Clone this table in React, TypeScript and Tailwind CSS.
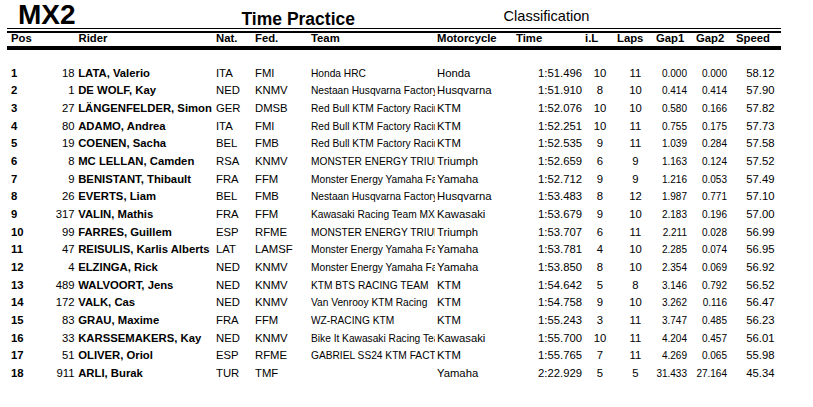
type Row = {
  pos: number;
  num: number;
  rider: string;
  nat: string;
  fed: string;
  team: string;
  moto: string;
  time: string;
  il: number;
  laps: number;
  gap1: string;
  gap2: string;
  speed: string;
};

const rows: Row[] = [
  { pos: 1, num: 18, rider: "LATA, Valerio", nat: "ITA", fed: "FMI", team: "Honda HRC", moto: "Honda", time: "1:51.496", il: 10, laps: 11, gap1: "0.000", gap2: "0.000", speed: "58.12" },
  { pos: 2, num: 1, rider: "DE WOLF, Kay", nat: "NED", fed: "KNMV", team: "Nestaan Husqvarna Factory Racing", moto: "Husqvarna", time: "1:51.910", il: 8, laps: 10, gap1: "0.414", gap2: "0.414", speed: "57.90" },
  { pos: 3, num: 27, rider: "LÄNGENFELDER, Simon", nat: "GER", fed: "DMSB", team: "Red Bull KTM Factory Racing", moto: "KTM", time: "1:52.076", il: 10, laps: 10, gap1: "0.580", gap2: "0.166", speed: "57.82" },
  { pos: 4, num: 80, rider: "ADAMO, Andrea", nat: "ITA", fed: "FMI", team: "Red Bull KTM Factory Racing", moto: "KTM", time: "1:52.251", il: 10, laps: 11, gap1: "0.755", gap2: "0.175", speed: "57.73" },
  { pos: 5, num: 19, rider: "COENEN, Sacha", nat: "BEL", fed: "FMB", team: "Red Bull KTM Factory Racing", moto: "KTM", time: "1:52.535", il: 9, laps: 11, gap1: "1.039", gap2: "0.284", speed: "57.58" },
  { pos: 6, num: 8, rider: "MC LELLAN, Camden", nat: "RSA", fed: "KNMV", team: "MONSTER ENERGY TRIUMPH RACING", moto: "Triumph", time: "1:52.659", il: 6, laps: 9, gap1: "1.163", gap2: "0.124", speed: "57.52" },
  { pos: 7, num: 9, rider: "BENISTANT, Thibault", nat: "FRA", fed: "FFM", team: "Monster Energy Yamaha Factory MX2", moto: "Yamaha", time: "1:52.712", il: 9, laps: 9, gap1: "1.216", gap2: "0.053", speed: "57.49" },
  { pos: 8, num: 26, rider: "EVERTS, Liam", nat: "BEL", fed: "FMB", team: "Nestaan Husqvarna Factory Racing", moto: "Husqvarna", time: "1:53.483", il: 8, laps: 12, gap1: "1.987", gap2: "0.771", speed: "57.10" },
  { pos: 9, num: 317, rider: "VALIN, Mathis", nat: "FRA", fed: "FFM", team: "Kawasaki Racing Team MXGP", moto: "Kawasaki", time: "1:53.679", il: 9, laps: 10, gap1: "2.183", gap2: "0.196", speed: "57.00" },
  { pos: 10, num: 99, rider: "FARRES, Guillem", nat: "ESP", fed: "RFME", team: "MONSTER ENERGY TRIUMPH RACING", moto: "Triumph", time: "1:53.707", il: 6, laps: 11, gap1: "2.211", gap2: "0.028", speed: "56.99" },
  { pos: 11, num: 47, rider: "REISULIS, Karlis Alberts", nat: "LAT", fed: "LAMSF", team: "Monster Energy Yamaha Factory MX2", moto: "Yamaha", time: "1:53.781", il: 4, laps: 10, gap1: "2.285", gap2: "0.074", speed: "56.95" },
  { pos: 12, num: 4, rider: "ELZINGA, Rick", nat: "NED", fed: "KNMV", team: "Monster Energy Yamaha Factory MX2", moto: "Yamaha", time: "1:53.850", il: 8, laps: 10, gap1: "2.354", gap2: "0.069", speed: "56.92" },
  { pos: 13, num: 489, rider: "WALVOORT, Jens", nat: "NED", fed: "KNMV", team: "KTM BTS RACING TEAM", moto: "KTM", time: "1:54.642", il: 5, laps: 8, gap1: "3.146", gap2: "0.792", speed: "56.52" },
  { pos: 14, num: 172, rider: "VALK, Cas", nat: "NED", fed: "KNMV", team: "Van Venrooy KTM Racing", moto: "KTM", time: "1:54.758", il: 9, laps: 10, gap1: "3.262", gap2: "0.116", speed: "56.47" },
  { pos: 15, num: 83, rider: "GRAU, Maxime", nat: "FRA", fed: "FFM", team: "WZ-RACING KTM", moto: "KTM", time: "1:55.243", il: 3, laps: 11, gap1: "3.747", gap2: "0.485", speed: "56.23" },
  { pos: 16, num: 33, rider: "KARSSEMAKERS, Kay", nat: "NED", fed: "KNMV", team: "Bike It Kawasaki Racing Team", moto: "Kawasaki", time: "1:55.700", il: 10, laps: 11, gap1: "4.204", gap2: "0.457", speed: "56.01" },
  { pos: 17, num: 51, rider: "OLIVER, Oriol", nat: "ESP", fed: "RFME", team: "GABRIEL SS24 KTM FACTORY", moto: "KTM", time: "1:55.765", il: 7, laps: 11, gap1: "4.269", gap2: "0.065", speed: "55.98" },
  { pos: 18, num: 911, rider: "ARLI, Burak", nat: "TUR", fed: "TMF", team: "", moto: "Yamaha", time: "2:22.929", il: 5, laps: 5, gap1: "31.433", gap2: "27.164", speed: "45.34" },
];

function HeaderRow() {
  return (
    <div className="flex h-[13px] items-baseline pl-[11px] text-[11.3px] font-bold leading-none">
      <div className="w-[67.5px]">Pos</div>
      <div className="w-[137.5px]">Rider</div>
      <div className="w-[39px]">Nat.</div>
      <div className="w-[56px]">Fed.</div>
      <div className="w-[126px]">Team</div>
      <div className="w-[79px]">Motorcycle</div>
      <div className="w-[69px]">Time</div>
      <div className="w-[32px]">i.L</div>
      <div className="w-[39px]">Laps</div>
      <div className="w-[40px]">Gap1</div>
      <div className="w-[40px]">Gap2</div>
      <div>Speed</div>
    </div>
  );
}

function ResultRow({ r }: { r: Row }) {
  return (
    <div className="flex h-[17.66px] items-baseline whitespace-nowrap pl-[11px] text-[11.3px] leading-[17.66px]">
      <div className="w-[40px] font-bold">{r.pos}</div>
      <div className="w-[23.5px] text-right">{r.num}</div>
      <div className="ml-[3.7px] w-[135.8px] overflow-hidden font-bold">{r.rider}</div>
      <div className="ml-[2px] w-[39px]">{r.nat}</div>
      <div className="w-[56px]">{r.fed}</div>
      <div className="w-[124px] overflow-hidden text-[10.2px]">{r.team}</div>
      <div className="ml-[2px] w-[83px]">{r.moto}</div>
      <div className="w-[62px] text-right">{r.time}</div>
      <div className="ml-[3px] w-[30px] text-center">{r.il}</div>
      <div className="ml-[5px] w-[31px] text-center">{r.laps}</div>
      <div className="w-[36px] text-right text-[10px]">{r.gap1}</div>
      <div className="w-[40px] text-right text-[10px]">{r.gap2}</div>
      <div className="w-[47.5px] text-right">{r.speed}</div>
    </div>
  );
}

export default function App() {
  return (
    <div className="h-[407px] w-[813px] overflow-hidden bg-white font-['Liberation_Sans',Arial,sans-serif] text-black">
      {/* title bar */}
      <div className="flex h-[28px] items-start pl-[18px]">
        <div className="mt-[0.5px] w-[223.5px] text-[28px] font-bold leading-none">MX2</div>
        <div className="mt-[11px] w-[262px] text-[17.5px] font-bold leading-none">Time Practice</div>
        <div className="mt-[9px] text-[14.6px] leading-none">Classification</div>
      </div>
      <div className="ml-[7px] h-px w-[774px] bg-black" />
      <div className="ml-[7px] mt-[2px] h-[2px] w-[774px] bg-black" />
      <HeaderRow />
      <div className="ml-[7px] h-[4px] w-[774px] bg-black" />

      <div className="mt-[14.75px]">
        {rows.map((r) => (
          <ResultRow key={r.pos} r={r} />
        ))}
      </div>
    </div>
  );
}
